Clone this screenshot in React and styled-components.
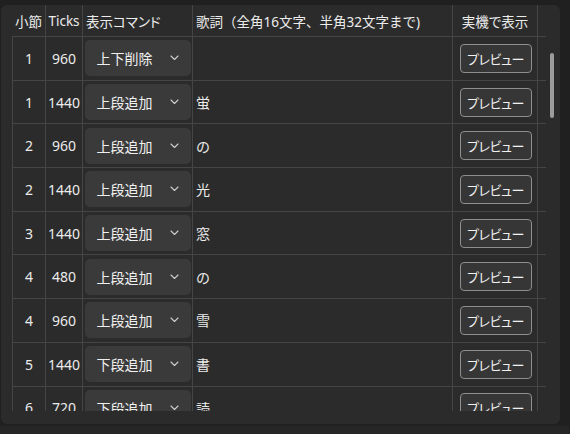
import React from "react";
import styled, { createGlobalStyle } from "styled-components";

const Global = createGlobalStyle`
  html, body { margin: 0; padding: 0; background: #202020; }
  body { font-family: "Noto Sans", "Noto Sans CJK JP", sans-serif; color: #e6e6e6; }
  * { box-sizing: border-box; }
`;

const Page = styled.div`
  display: flex;
  flex-direction: column;
  padding: 5px 10px 0 1px;
  height: 434px;
  overflow: hidden;
`;

const Panel = styled.div`
  position: relative;
  width: 559px;
  height: 419px;
  background: #2b2b2b;
  border-radius: 6px;
  padding-left: 11px;
  flex-shrink: 0;
`;

const Footer = styled.div`
  margin-top: 2px;
  height: 10px;
  width: 569px;
  margin-left: -1px;
  background: #262626;
  flex-shrink: 0;
`;

const COLS = "34px 37px 110px 260px 85px 8px";

const HeaderRow = styled.div`
  display: grid;
  grid-template-columns: ${COLS};
  width: 534px;
  height: 32px;
  border-bottom: 1px solid #454545;
`;

const HeadCell = styled.div`
  display: flex;
  align-items: center;
  justify-content: ${(p) => (p.$left ? "flex-start" : "center")};
  padding-left: ${(p) => (p.$left ? "3px" : "0")};
  border-right: ${(p) => (p.$last ? "none" : "1px solid #454545")};
  font-family: "Noto Sans", "Noto Sans CJK JP", sans-serif;
  font-feature-settings: ${(p) => (p.$plain ? "normal" : '"palt"')};
  font-size: 13.5px;
  color: #ececec;
  white-space: nowrap;
  overflow: hidden;
`;

const Body = styled.div`
  height: 374px;
  overflow: hidden;
`;

const Row = styled.div`
  display: grid;
  grid-template-columns: ${COLS};
  width: 534px;
  height: 43.7px;
  border-bottom: 1px solid #454545;
`;

const Cell = styled.div`
  display: flex;
  align-items: center;
  justify-content: ${(p) => (p.$left ? "flex-start" : "center")};
  padding-left: ${(p) => (p.$left ? "3px" : "0")};
  border-right: ${(p) => (p.$last ? "none" : "1px solid #454545")};
  border-left: ${(p) => (p.$first ? "1px solid #454545" : "none")};
  font-size: 14px;
  font-family: "Noto Sans", "Noto Sans CJK JP", sans-serif;
  color: #ececec;
  white-space: nowrap;
`;

const Select = styled.div`
  width: 106px;
  height: 36px;
  border-radius: 5px;
  background: #3a3a3a;
  display: flex;
  align-items: center;
  justify-content: space-between;
  padding: 0 12px 0 12px;
  font-family: "Noto Sans CJK JP", sans-serif;
  font-size: 14px;
  color: #f0f0f0;
`;

const PreviewButton = styled.button`
  width: 72px;
  height: 29px;
  margin-left: 1px;
  border: 1px solid #8e8e8e;
  border-radius: 4px;
  background: #363636;
  color: #f0f0f0;
  font-family: "Noto Sans CJK JP", sans-serif;
  font-feature-settings: "palt";
  font-size: 13px;
  letter-spacing: -0.4px;
  padding: 0;
  display: flex;
  align-items: center;
  justify-content: center;
`;

const ScrollThumb = styled.div`
  position: absolute;
  left: 549px;
  top: 48px;
  width: 4px;
  height: 65px;
  border-radius: 2px;
  background: #9c9c9c;
`;

const Chevron = () => (
  <svg width="9" height="6" viewBox="0 0 9 6" fill="none">
    <polyline points="1,1 4.5,4.5 8,1" stroke="#cfcfcf" strokeWidth="1.1" strokeLinecap="round" strokeLinejoin="round" />
  </svg>
);

const rows = [
  [1, 960, "上下削除", ""],
  [1, 1440, "上段追加", "蛍"],
  [2, 960, "上段追加", "の"],
  [2, 1440, "上段追加", "光"],
  [3, 1440, "上段追加", "窓"],
  [4, 480, "上段追加", "の"],
  [4, 960, "上段追加", "雪"],
  [5, 1440, "下段追加", "書"],
  [6, 720, "下段追加", "読"],
];

export default function App() {
  return (
    <>
      <Global />
      <Page>
        <Panel>
          <HeaderRow>
            <HeadCell>小節</HeadCell>
            <HeadCell>Ticks</HeadCell>
            <HeadCell $left>表示コマンド</HeadCell>
            <HeadCell $left $plain>歌詞（全角16文字、半角32文字まで)</HeadCell>
            <HeadCell>実機で表示</HeadCell>
            <HeadCell $last />
          </HeaderRow>
          <Body>
            {rows.map((r, i) => (
              <Row key={i}>
                <Cell $first>{r[0]}</Cell>
                <Cell>{r[1]}</Cell>
                <Cell>
                  <Select>
                    <span>{r[2]}</span>
                    <Chevron />
                  </Select>
                </Cell>
                <Cell $left>{r[3]}</Cell>
                <Cell>
                  <PreviewButton>プレビュー</PreviewButton>
                </Cell>
                <Cell $last />
              </Row>
            ))}
          </Body>
          <ScrollThumb />
        </Panel>
        <Footer />
      </Page>
    </>
  );
}
